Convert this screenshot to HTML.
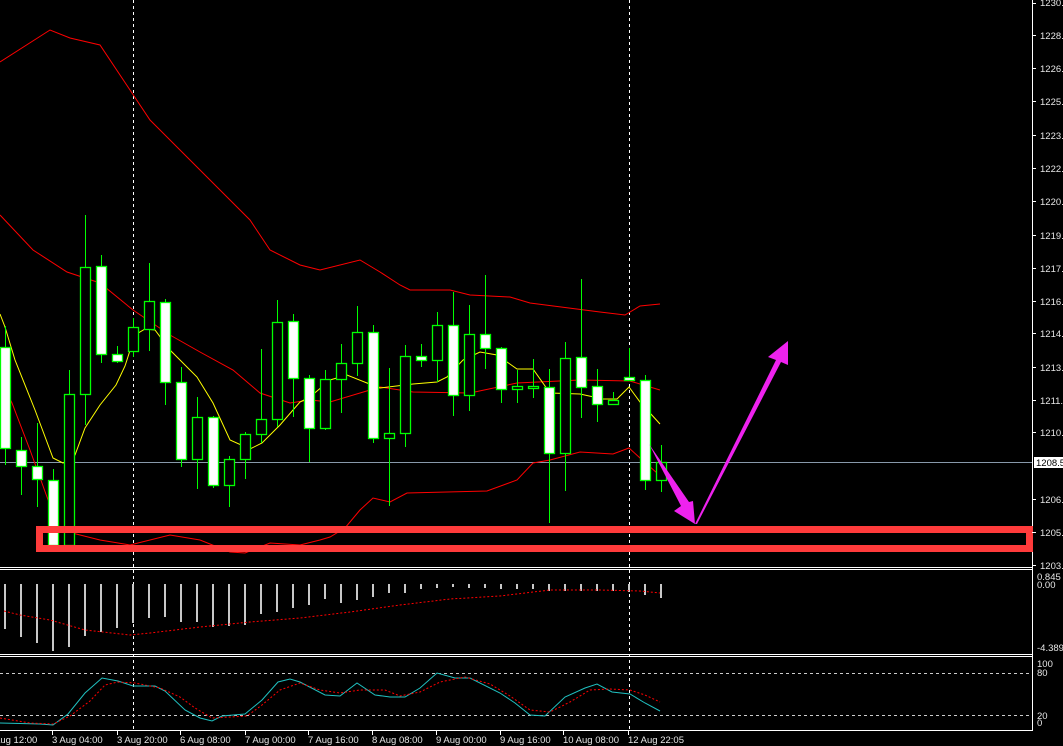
<!DOCTYPE html>
<html><head><meta charset="utf-8"><style>
html,body{margin:0;padding:0;background:#000;width:1063px;height:746px;overflow:hidden}
svg{display:block}
text{font-family:"Liberation Sans",sans-serif;font-size:9.5px;fill:#e6e6e6}
</style></head><body>
<svg id="s" width="1063" height="746" xmlns="http://www.w3.org/2000/svg">
<rect width="1063" height="746" fill="#000"/>
<!-- panel separators -->
<g stroke="#fff" stroke-width="1">
<line x1="0" y1="567.5" x2="1033" y2="567.5"/><line x1="0" y1="569.5" x2="1033" y2="569.5"/>
<line x1="0" y1="654.5" x2="1033" y2="654.5"/><line x1="0" y1="656.5" x2="1033" y2="656.5"/>
<line x1="0" y1="730.5" x2="1033" y2="730.5"/>
<line x1="1032.5" y1="0" x2="1032.5" y2="731"/>
</g>
<!-- vertical dashed lines -->
<g stroke="#fff" stroke-dasharray="3,3" stroke-width="1">
<line x1="133.5" y1="0" x2="133.5" y2="731"/>
<line x1="629.5" y1="0" x2="629.5" y2="731"/>
</g>
<!-- stoch levels -->
<g stroke="#ccc" stroke-dasharray="3,3" stroke-width="1">
<line x1="0" y1="673.5" x2="1032" y2="673.5"/>
<line x1="0" y1="715.5" x2="1032" y2="715.5"/>
</g>
<!-- current price line -->
<line x1="0" y1="462.5" x2="1032" y2="462.5" stroke="#8899aa" stroke-width="1"/>
<!-- bollinger -->
<g fill="none" stroke="#f00" stroke-width="1">
<polyline points="0,62 50,30 70,38 100,45 130,90 150,120 190,160 220,190 250,220 270,250 300,265 320,270 360,260 380,272 400,285 410,290 450,290 470,295 510,297 530,303 600,312 625,315 640,306 660,304"/>
<polyline points="0,215 33,250 67,272 100,283 133,310 170,335 200,352 233,370 260,393 290,403 310,400 330,402 380,387 413,392 470,393 517,383 580,380 630,381 660,390"/>
<polyline points="0,380 12,403 30,450 47,497 60,530 100,540 130,545 170,535 200,540 230,552 245,553 270,543 300,545 320,540 330,537 345,528 360,510 373,498 390,502 407,493 487,491 517,480 533,463 550,460 580,452 613,454 629,448 640,458 657,473"/>
</g>
<polyline fill="none" stroke="#ff0" stroke-width="1" points="0,314 5,327 15,360 35,410 53,458 63,463 75,455 85,428 100,405 116,385 125,366 135,335 145,329 155,330 170,350 197,377 213,403 230,440 250,449 262,443 280,425 293,410 300,402 310,397 330,380 347,375 367,383 380,388 413,384 437,382 447,377 463,360 480,352 497,355 517,369 533,369 550,393 580,394 603,399 617,399 629,387 640,402 660,424"/>
<g id="candles"></g>
<g id="macd"></g>
<!-- macd signal -->
<polyline fill="none" stroke="#f00" stroke-dasharray="2,2" stroke-width="1" points="4,611 20,615 50,620 85,630 130,635 150,633 200,627 250,622 300,618 350,612 400,605 450,599 500,596 550,590 600,590 640,591 660,593"/>
<!-- stoch -->
<polyline fill="none" stroke="#20c0c0" stroke-width="1" points="0,723 40,724 53,725 68,714 85,693 102,678 118,681 133,686 155,686 165,691 185,710 200,718 212,721 222,716 245,714 262,700 278,682 290,679 300,682 325,695 340,696 357,683 375,695 390,697 405,697 420,688 437,673 455,678 470,678 500,693 515,703 530,715 545,716 565,697 585,688 597,684 612,692 630,694 645,703 660,711"/>
<polyline fill="none" stroke="#f00" stroke-dasharray="2,2" stroke-width="1" points="0,718 30,723 53,724 70,716 90,701 105,685 118,682 135,683 160,688 180,697 195,708 212,718 230,717 247,716 262,705 280,690 300,683 320,690 340,693 360,690 385,690 400,696 420,692 440,682 465,677 490,684 510,696 530,710 550,712 570,702 590,690 610,689 630,690 645,695 660,702"/>
<!-- red rectangle -->
<rect x="39.5" y="529.5" width="990" height="19" fill="none" stroke="#ff3b3b" stroke-width="7"/>
<!-- magenta arrows -->
<g fill="#ee22ee">
<polygon points="649,444 689,502 693,501 695,524 674,511 681,506"/>
<polygon points="695,524 776,360 768,357 788,341 788,365 781,362 697,524"/>
</g>
<!-- price axis ticks & labels -->
<g stroke="#fff" stroke-width="1" id="ticks"></g>
<g>
<text x="1040" y="6">1230.0</text>
<text x="1040" y="39">1228.5</text>
<text x="1040" y="72">1226.9</text>
<text x="1040" y="105">1225.4</text>
<text x="1040" y="139">1223.8</text>
<text x="1040" y="172">1222.3</text>
<text x="1040" y="205">1220.7</text>
<text x="1040" y="239">1219.2</text>
<text x="1040" y="272">1217.7</text>
<text x="1040" y="305">1216.1</text>
<text x="1040" y="337">1214.6</text>
<text x="1040" y="371">1213.0</text>
<text x="1040" y="404">1211.5</text>
<text x="1040" y="436">1210.0</text>
<rect x="1034" y="457" width="29" height="11" fill="#fff"/>
<text x="1036" y="466" style="fill:#000">1208.5</text>
<text x="1040" y="503">1206.9</text>
<text x="1040" y="536">1205.3</text>
<text x="1040" y="569">1203.8</text>
<text x="1037" y="580">0.845</text>
<text x="1037" y="588">0.00</text>
<text x="1037" y="651">-4.389</text>
<text x="1037" y="667">100</text>
<text x="1037" y="676">80</text>
<text x="1037" y="719">20</text>
<text x="1037" y="726">0</text>
</g>
<!-- time labels -->
<g>
<text x="-6" y="743">Aug 12:00</text>
<text x="52" y="743">3 Aug 04:00</text>
<text x="117" y="743">3 Aug 20:00</text>
<text x="180" y="743">6 Aug 08:00</text>
<text x="245" y="743">7 Aug 00:00</text>
<text x="308" y="743">7 Aug 16:00</text>
<text x="372" y="743">8 Aug 08:00</text>
<text x="436" y="743">9 Aug 00:00</text>
<text x="500" y="743">9 Aug 16:00</text>
<text x="563" y="743">10 Aug 08:00</text>
<text x="628" y="743">12 Aug 22:05</text>
</g>
<g stroke="#fff" stroke-width="1">
<line x1="52.5" y1="731" x2="52.5" y2="735"/><line x1="117.5" y1="731" x2="117.5" y2="735"/><line x1="180.5" y1="731" x2="180.5" y2="735"/><line x1="245.5" y1="731" x2="245.5" y2="735"/><line x1="308.5" y1="731" x2="308.5" y2="735"/><line x1="372.5" y1="731" x2="372.5" y2="735"/><line x1="436.5" y1="731" x2="436.5" y2="735"/><line x1="500.5" y1="731" x2="500.5" y2="735"/><line x1="563.5" y1="731" x2="563.5" y2="735"/><line x1="628.5" y1="731" x2="628.5" y2="735"/>
</g>
</svg>
<script>
var NS="http://www.w3.org/2000/svg";
function el(p,t,a){var e=document.createElementNS(NS,t);for(var k in a)e.setAttribute(k,a[k]);p.appendChild(e);return e;}
var C=[[326,465,347,448,1],[437,495,450,466,1],[423,507,466,479,1],[469,545,480,545,1],[370,545,394,545,0],[215,425,267,394,0],[255,363,266,354,1],[346,363,354,361,1],[318,357,327,351,0],[263,351,301,329,0],[299,405,302,382,1],[367,467,382,459,1],[397,489,417,459,0],[416,488,417,485,1],[456,507,459,485,0],[432,479,434,459,0],[349,443,419,434,0],[300,427,322,419,0],[314,417,321,378,1],[375,462,378,428,1],[370,430,379,428,0],[344,413,363,379,0],[306,376,332,363,0],[325,443,332,438,1],[368,506,433,438,0],[345,447,356,433,0],[344,367,356,360,1],[312,382,325,360,0],[292,416,325,395,1],[305,411,334,395,0],[275,369,334,348,1],[347,403,348,389,1],[370,403,386,389,0],[359,398,386,387,0],[369,523,387,453,1],[342,491,358,453,0],[279,418,357,387,1],[369,422,386,404,1],[392,404,400,404,0],[348,380,377,380,1],[375,490,380,480,1],[445,492,462,480,0]];
var g=document.getElementById("candles");
C.forEach(function(c,i){var x=16*i,cx=x+5.5;
el(g,"line",{x1:cx,y1:c[0],x2:cx,y2:c[1],stroke:"#0f0","stroke-width":1});
var t=Math.min(c[2],c[3]),b=Math.max(c[2],c[3]);if(b-t<2)b=t+2;
el(g,"rect",{x:x+0.5,y:t+0.5,width:10,height:b-t,fill:c[4]?"#fff":"#000",stroke:"#0f0","stroke-width":1.3});});
var M=[629,637,643,651,647,636,632,628,623,618,617,622,622,627,626,625,614,612,608,605,599,603,600,597,593,593,589,588,587,588,588,589,589,589,591,591,591,591,591,592,595,598];
var m=document.getElementById("macd");
M.forEach(function(b,i){el(m,"rect",{x:16*i+4,y:584,width:2,height:b-584,fill:"#c8c8c8"});});
var tk=document.getElementById("ticks");
[3,35,68,101,135,168,201,235,268,301,333,367,400,432,499,532,565].forEach(function(y){el(tk,"line",{x1:1032,y1:y+0.5,x2:1036,y2:y+0.5});});
</script>
</body></html>
